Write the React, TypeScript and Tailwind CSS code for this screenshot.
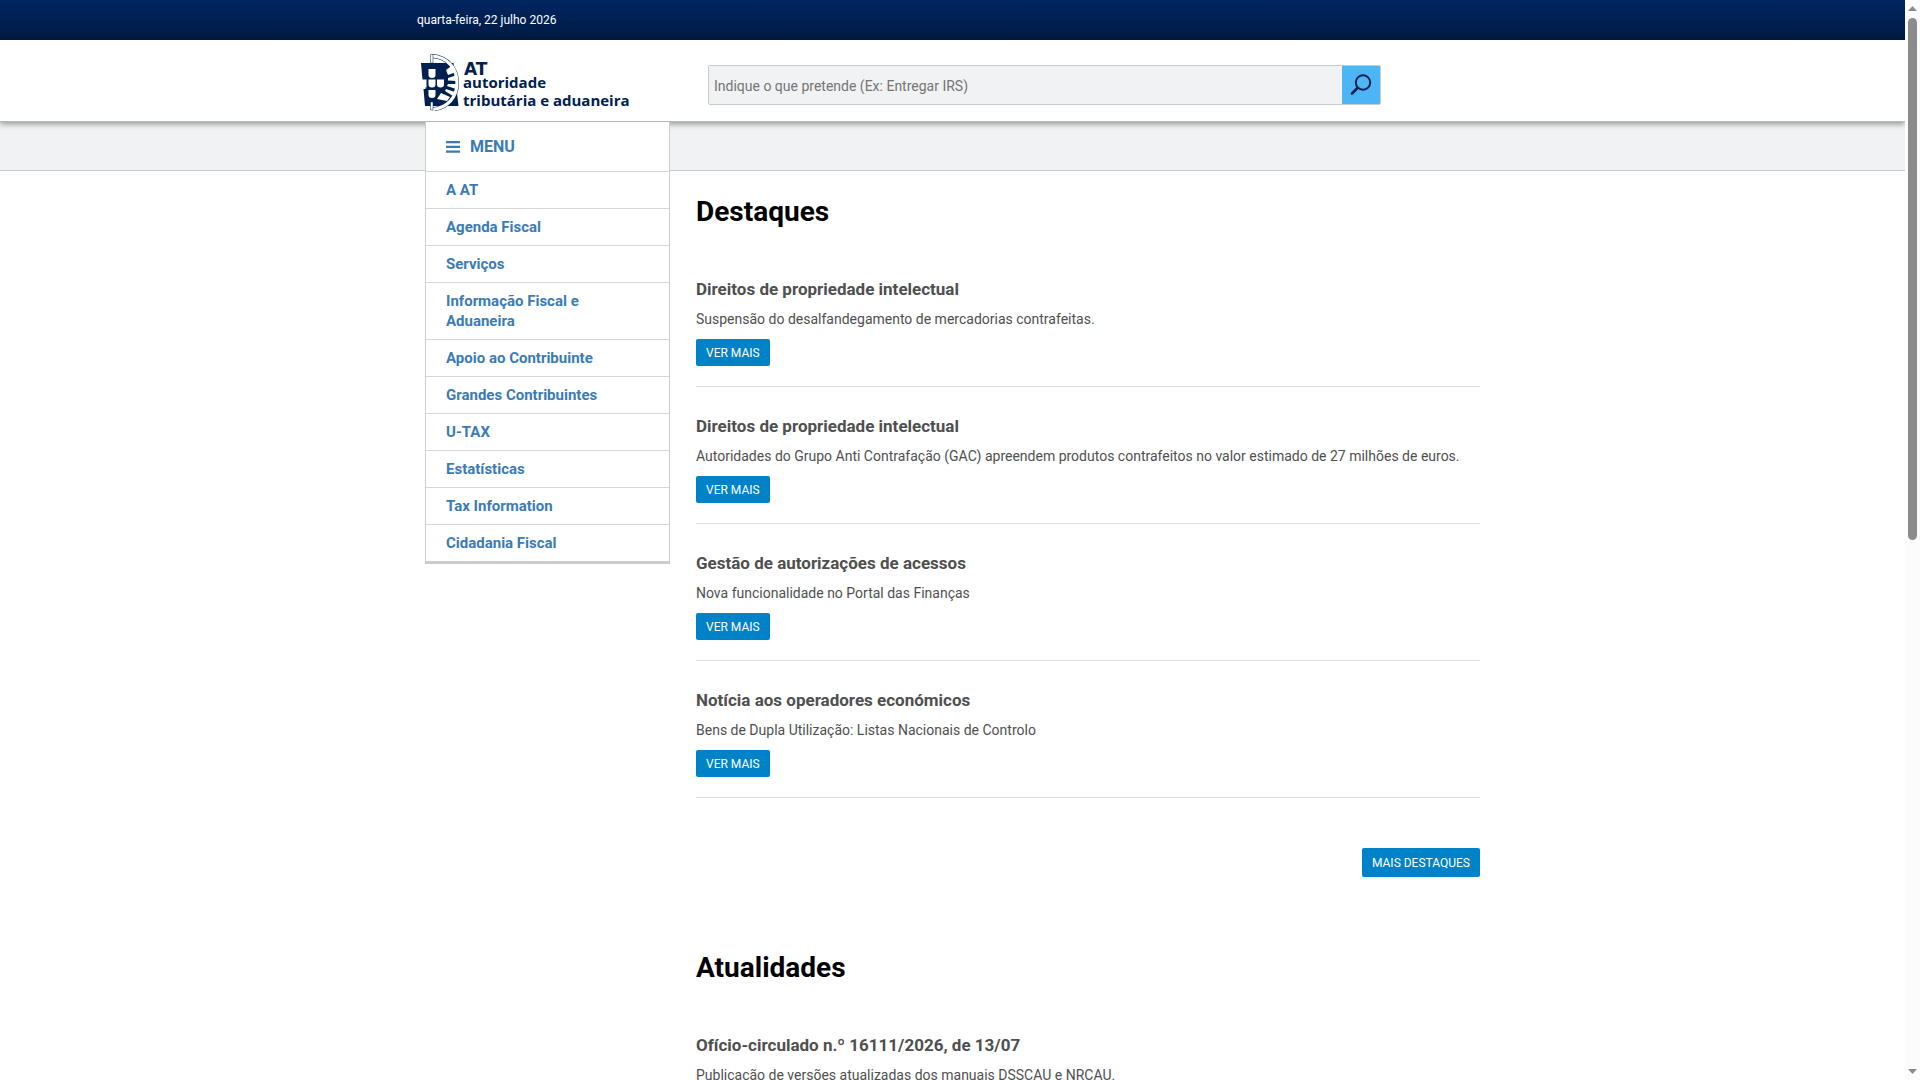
const menuItems = [
  "A AT",
  "Agenda Fiscal",
  "Serviços",
  "Informação Fiscal e Aduaneira",
  "Apoio ao Contribuinte",
  "Grandes Contribuintes",
  "U-TAX",
  "Estatísticas",
  "Tax Information",
  "Cidadania Fiscal",
];

const destaques = [
  {
    title: "Direitos de propriedade intelectual",
    text: "Suspensão do desalfandegamento de mercadorias contrafeitas.",
  },
  {
    title: "Direitos de propriedade intelectual",
    text: "Autoridades do Grupo Anti Contrafação (GAC) apreendem produtos contrafeitos no valor estimado de 27 milhões de euros.",
  },
  {
    title: "Gestão de autorizações de acessos",
    text: "Nova funcionalidade no Portal das Finanças",
  },
  {
    title: "Notícia aos operadores económicos",
    text: "Bens de Dupla Utilização: Listas Nacionais de Controlo",
  },
];

const atualidades = [
  {
    title: "Ofício-circulado n.º 16111/2026, de 13/07",
    text: "Publicação de versões atualizadas dos manuais DSSCAU e NRCAU.",
  },
];

function Logo() {
  return (
    <svg
      width="216"
      height="60"
      viewBox="0 0 216 60"
      role="img"
      aria-label="AT autoridade tributária e aduaneira"
    >
      <path d="M4 12H36.500L41.500 55H8L6.500 38H8.500V29H5.500Z" fill="#00204f" />
      <g fill="#fff">
        <path d="M11.500 18h7v6a3.500 3 0 0 1-7 0z" />
        <path d="M11.500 28.500h7v5a3.500 3 0 0 1-7 0z" />
        <path d="M20 28.500h7v5a3.500 3 0 0 1-7 0z" />
        <path d="M11.500 39h7v5a3.500 3 0 0 1-7 0z" />
        <path d="M5 28.500h4.500v8H5z" />
      </g>
      <path
        d="M15 5C31 6 40 18 40 32S31 57 15 58.500"
        fill="none"
        stroke="#00204f"
        strokeWidth="4"
      />
      <path
        d="M15 5C31 6 40 18 40 32S31 57 15 58.500"
        fill="none"
        stroke="#fff"
        strokeWidth="3.200"
      />
      <g fill="#fff">
        <path d="M29 19 36 14 39 21 31 24Z" />
        <path d="M31 27 40 24V30L31 29.500Z" />
        <path d="M31 33 40 33 39 38 30 35Z" />
        <path d="M29 38 38 41 36 45 28 40Z" />
        <path d="M24 42 33 46 30 50 20 48Z" />
      </g>
      <path
        d="M13.500 3.500h2.500v8.500h-2.500zM13.500 51h2.500v8h-2.500z"
        fill="#fff"
        stroke="#00204f"
        strokeWidth="0.500"
      />
      <g fill="#00204f" fontWeight="700">
        <text x="47" y="24" fontSize="17" fontFamily="'DejaVu Sans', sans-serif">
          AT
        </text>
        <g fontSize="15" fontFamily="'Open Sans', sans-serif">
          <text x="46" y="37">
            autoridade
          </text>
          <text x="46" y="55">
            tributária e aduaneira
          </text>
        </g>
      </g>
    </svg>
  );
}

function MenuIcon() {
  return (
    <svg width="14" height="12" viewBox="0 0 14 12" fill="currentColor" aria-hidden="true">
      <path d="M0 0h14v2.200H0zM0 4.800h14V7H0zM0 9.600h14v2.200H0z" />
    </svg>
  );
}

function SearchIcon() {
  return (
    <svg width="24" height="24" viewBox="0 0 24 24" fill="none" stroke="#00204f" aria-hidden="true">
      <circle cx="14" cy="9.500" r="7.200" strokeWidth="2" />
      <path d="M8.500 15 3 20.500" strokeWidth="2.500" strokeLinecap="round" />
    </svg>
  );
}

function NewsItem({ title, text }: { title: string; text: string }) {
  return (
    <article className="mb-[23px] border-b border-[#dddddd] pb-5 text-[#4f4f4f]">
      <h3 className="pt-1 text-[17px] leading-6 font-bold">{title}</h3>
      <p className="mt-2 text-sm leading-5">{text}</p>
      <a
        href="#"
        className="mt-2.5 flex h-[27px] w-fit items-center rounded-xs bg-[#0082c8] px-2.5 text-xs text-white"
      >
        VER MAIS
      </a>
    </article>
  );
}

function Scrollbar() {
  return (
    <div
      aria-hidden="true"
      className="flex w-[15px] shrink-0 flex-col items-center bg-[#fcfcfc] py-1.5"
    >
      <svg width="9" height="5" viewBox="0 0 9 5" fill="#8b8b8b">
        <path d="M0 5 4.500 0 9 5Z" />
      </svg>
      <div className="flex w-full flex-1 flex-col items-center py-[7px]">
        <div className="h-1/2 w-[9px] rounded-full bg-[#8b8b8b]" />
      </div>
      <svg width="9" height="5" viewBox="0 0 9 5" fill="#8b8b8b">
        <path d="M0 0 4.500 5 9 0Z" />
      </svg>
    </div>
  );
}

export default function App() {
  return (
    <div className="flex h-screen overflow-hidden bg-white font-[Roboto,sans-serif] text-black">
      <div className="min-w-0 flex-1 overflow-hidden">
        <div className="h-10 bg-linear-to-b from-[#002661] to-[#001a42]">
          <div className="mx-auto flex h-full max-w-[1071px] items-center text-xs text-white">
            quarta-feira, 22 julho 2026
          </div>
        </div>

        <header className="relative z-10 h-[82px] border-b border-[#b4b8b8] bg-white shadow-[0_2px_6px_rgba(0,0,0,0.4)]">
          <div className="mx-auto flex h-full max-w-[1071px] items-start">
            <a href="#" className="mt-[11px] block w-[291px]">
              <Logo />
            </a>
            <form
              className="mt-[25px] flex h-10 w-[673px] overflow-hidden rounded-xs border border-[#c9cccd]"
              onSubmit={(e) => e.preventDefault()}
            >
              <input
                type="text"
                aria-label="Pesquisa"
                placeholder="Indique o que pretende (Ex: Entregar IRS)"
                className="min-w-0 flex-1 bg-[#f0f2f3] px-[5px] pt-0.5 text-sm outline-none placeholder:text-[#757575]"
              />
              <button
                type="submit"
                aria-label="Pesquisar"
                className="flex w-[38px] items-center justify-center bg-[#4db5f5]"
              >
                <SearchIcon />
              </button>
            </form>
          </div>
        </header>

        <div className="h-[49px] border-b border-[#c9cccd] bg-[#f0f2f3]" />

        <div className="mx-auto flex max-w-[1071px] items-start px-2">
          <nav className="relative z-10 -mt-[49px] w-[245px] shrink-0 border-x border-b-3 border-[#cccccc] bg-white font-bold text-[#3b7bb5]">
            <button
              type="button"
              className="flex h-[49px] w-full items-center gap-2.5 px-5 text-base"
            >
              <MenuIcon />
              MENU
            </button>
            <ul>
              {menuItems.map((item) => (
                <li key={item} className="border-t border-[#d5d8d8]">
                  <a href="#" className="block py-2 pr-16 pl-5 text-[15px] leading-5">
                    {item}
                  </a>
                </li>
              ))}
            </ul>
          </nav>

          <main className="ml-[26px] min-w-0 flex-1">
            <h2 className="mt-[25px] mb-[45px] text-[28px] leading-8 font-bold">Destaques</h2>
            {destaques.map((item, i) => (
              <NewsItem key={i} {...item} />
            ))}
            <div className="mt-[50px] flex justify-end">
              <a
                href="#"
                className="flex h-[29px] items-center rounded-xs bg-[#0082c8] px-2.5 text-xs text-white"
              >
                MAIS DESTAQUES
              </a>
            </div>

            <h2 className="mt-[75px] mb-[45px] text-[28px] leading-8 font-bold">Atualidades</h2>
            {atualidades.map((item, i) => (
              <NewsItem key={i} {...item} />
            ))}
          </main>
        </div>
      </div>
      <Scrollbar />
    </div>
  );
}
